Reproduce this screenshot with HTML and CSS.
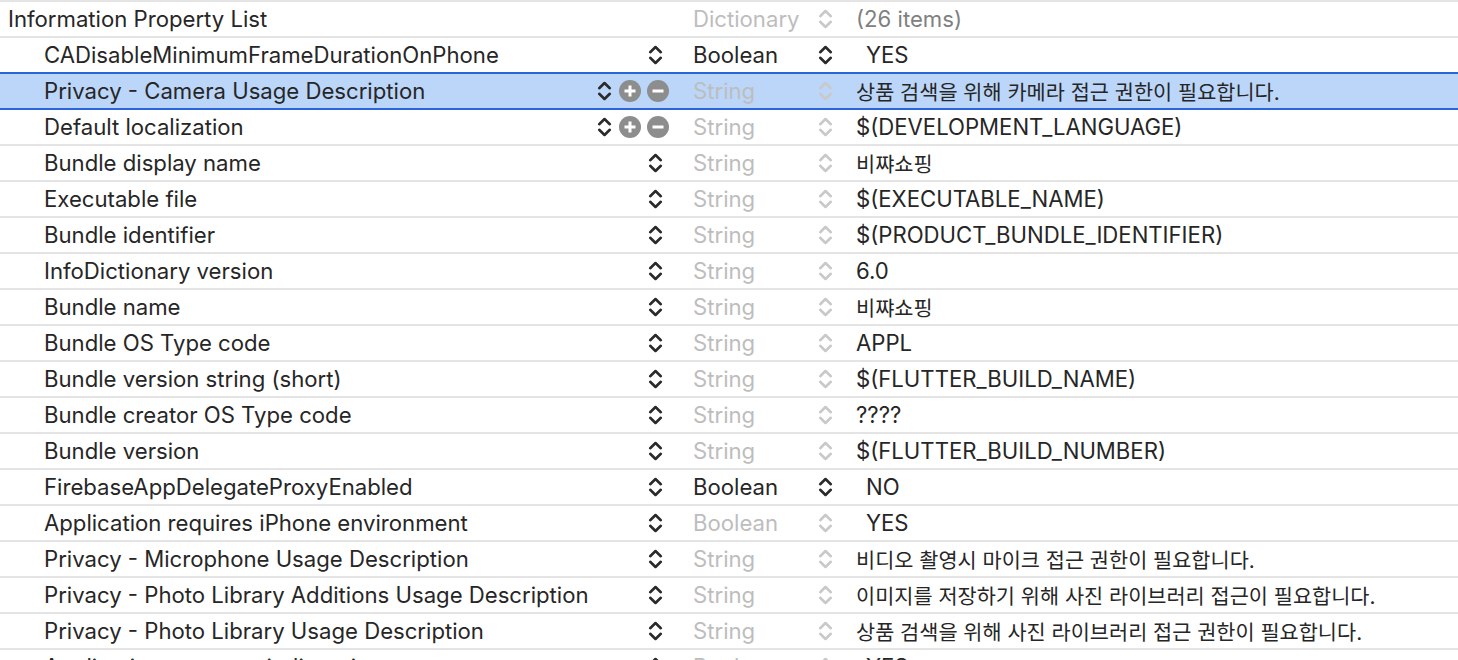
FILE: index.html
```html
<!DOCTYPE html>
<html>
<head>
<meta charset="utf-8">
<link rel="stylesheet" href="styles.css">
</head>
<body>
<svg width="0" height="0" class="defs">
  <defs>
    <symbol id="step" viewBox="0 0 15 22">
      <polyline points="2.2,8.2 7.5,3 12.8,8.2" fill="none" stroke="currentColor" stroke-width="2.6" stroke-linecap="round" stroke-linejoin="round"/>
      <polyline points="2.2,13.8 7.5,19 12.8,13.8" fill="none" stroke="currentColor" stroke-width="2.6" stroke-linecap="round" stroke-linejoin="round"/>
    </symbol>
    <symbol id="plus" viewBox="0 0 22 22">
      <circle cx="11" cy="11" r="11" fill="#8d8d8d"/>
      <path d="M11 5.5v11M5.5 11h11" stroke="#fff" stroke-width="3" stroke-linecap="butt"/>
    </symbol>
    <symbol id="minus" viewBox="0 0 22 22">
      <circle cx="11" cy="11" r="11" fill="#8d8d8d"/>
      <path d="M5.5 11h11" stroke="#fff" stroke-width="3"/>
    </symbol>
  </defs>
</svg>
<div class="plist">
  <div class="row root">
    <div class="key"><span class="name">Information Property List</span></div>
    <div class="type dim">Dictionary</div>
    <svg class="step dim"><use href="#step"/></svg>
    <div class="val muted">(26 items)</div>
  </div>
  <div class="row">
    <div class="key"><span class="name">CADisableMinimumFrameDurationOnPhone</span><span class="ctl"><svg class="step"><use href="#step"/></svg></span></div>
    <div class="type">Boolean</div>
    <svg class="step"><use href="#step"/></svg>
    <div class="val bool">YES</div>
  </div>
  <div class="row sel">
    <div class="key"><span class="name">Privacy - Camera Usage Description</span><span class="ctl wide"><svg class="step"><use href="#step"/></svg><svg class="btn"><use href="#plus"/></svg><svg class="btn"><use href="#minus"/></svg></span></div>
    <div class="type dim">String</div>
    <svg class="step dim"><use href="#step"/></svg>
    <div class="val ko">상품 검색을 위해 카메라 접근 권한이 필요합니다.</div>
  </div>
  <div class="row">
    <div class="key"><span class="name">Default localization</span><span class="ctl wide"><svg class="step"><use href="#step"/></svg><svg class="btn"><use href="#plus"/></svg><svg class="btn"><use href="#minus"/></svg></span></div>
    <div class="type dim">String</div>
    <svg class="step dim"><use href="#step"/></svg>
    <div class="val">$(DEVELOPMENT_LANGUAGE)</div>
  </div>
  <div class="row">
    <div class="key"><span class="name">Bundle display name</span><span class="ctl"><svg class="step"><use href="#step"/></svg></span></div>
    <div class="type dim">String</div>
    <svg class="step dim"><use href="#step"/></svg>
    <div class="val ko">비쨔쇼핑</div>
  </div>
  <div class="row">
    <div class="key"><span class="name">Executable file</span><span class="ctl"><svg class="step"><use href="#step"/></svg></span></div>
    <div class="type dim">String</div>
    <svg class="step dim"><use href="#step"/></svg>
    <div class="val">$(EXECUTABLE_NAME)</div>
  </div>
  <div class="row">
    <div class="key"><span class="name">Bundle identifier</span><span class="ctl"><svg class="step"><use href="#step"/></svg></span></div>
    <div class="type dim">String</div>
    <svg class="step dim"><use href="#step"/></svg>
    <div class="val">$(PRODUCT_BUNDLE_IDENTIFIER)</div>
  </div>
  <div class="row">
    <div class="key"><span class="name">InfoDictionary version</span><span class="ctl"><svg class="step"><use href="#step"/></svg></span></div>
    <div class="type dim">String</div>
    <svg class="step dim"><use href="#step"/></svg>
    <div class="val">6.0</div>
  </div>
  <div class="row">
    <div class="key"><span class="name">Bundle name</span><span class="ctl"><svg class="step"><use href="#step"/></svg></span></div>
    <div class="type dim">String</div>
    <svg class="step dim"><use href="#step"/></svg>
    <div class="val ko">비쨔쇼핑</div>
  </div>
  <div class="row">
    <div class="key"><span class="name">Bundle OS Type code</span><span class="ctl"><svg class="step"><use href="#step"/></svg></span></div>
    <div class="type dim">String</div>
    <svg class="step dim"><use href="#step"/></svg>
    <div class="val">APPL</div>
  </div>
  <div class="row">
    <div class="key"><span class="name">Bundle version string (short)</span><span class="ctl"><svg class="step"><use href="#step"/></svg></span></div>
    <div class="type dim">String</div>
    <svg class="step dim"><use href="#step"/></svg>
    <div class="val">$(FLUTTER_BUILD_NAME)</div>
  </div>
  <div class="row">
    <div class="key"><span class="name">Bundle creator OS Type code</span><span class="ctl"><svg class="step"><use href="#step"/></svg></span></div>
    <div class="type dim">String</div>
    <svg class="step dim"><use href="#step"/></svg>
    <div class="val">????</div>
  </div>
  <div class="row">
    <div class="key"><span class="name">Bundle version</span><span class="ctl"><svg class="step"><use href="#step"/></svg></span></div>
    <div class="type dim">String</div>
    <svg class="step dim"><use href="#step"/></svg>
    <div class="val">$(FLUTTER_BUILD_NUMBER)</div>
  </div>
  <div class="row">
    <div class="key"><span class="name">FirebaseAppDelegateProxyEnabled</span><span class="ctl"><svg class="step"><use href="#step"/></svg></span></div>
    <div class="type">Boolean</div>
    <svg class="step"><use href="#step"/></svg>
    <div class="val bool">NO</div>
  </div>
  <div class="row">
    <div class="key"><span class="name">Application requires iPhone environment</span><span class="ctl"><svg class="step"><use href="#step"/></svg></span></div>
    <div class="type dim">Boolean</div>
    <svg class="step dim"><use href="#step"/></svg>
    <div class="val bool">YES</div>
  </div>
  <div class="row">
    <div class="key"><span class="name">Privacy - Microphone Usage Description</span><span class="ctl"><svg class="step"><use href="#step"/></svg></span></div>
    <div class="type dim">String</div>
    <svg class="step dim"><use href="#step"/></svg>
    <div class="val ko">비디오 촬영시 마이크 접근 권한이 필요합니다.</div>
  </div>
  <div class="row">
    <div class="key"><span class="name">Privacy - Photo Library Additions Usage Description</span><span class="ctl"><svg class="step"><use href="#step"/></svg></span></div>
    <div class="type dim">String</div>
    <svg class="step dim"><use href="#step"/></svg>
    <div class="val ko">이미지를 저장하기 위해 사진 라이브러리 접근이 필요합니다.</div>
  </div>
  <div class="row">
    <div class="key"><span class="name">Privacy - Photo Library Usage Description</span><span class="ctl"><svg class="step"><use href="#step"/></svg></span></div>
    <div class="type dim">String</div>
    <svg class="step dim"><use href="#step"/></svg>
    <div class="val ko">상품 검색을 위해 사진 라이브러리 접근 권한이 필요합니다.</div>
  </div>
  <div class="row last">
    <div class="key"><span class="name">Application supports indirect input events</span><span class="ctl"><svg class="step"><use href="#step"/></svg></span></div>
    <div class="type dim">Boolean</div>
    <svg class="step dim"><use href="#step"/></svg>
    <div class="val bool">YES</div>
  </div>
</div>
</body>
</html>
```
FILE: styles.css
```css
html, body {
  margin: 0;
  padding: 0;
  background: #ffffff;
  overflow: hidden;
}
.defs {
  position: absolute;
  width: 0;
  height: 0;
}
.plist {
  font-family: "Inter", "Noto Sans CJK KR", sans-serif;
  font-size: 22.15px;
  color: #262626;
  width: 1458px;
}
.row {
  display: grid;
  grid-template-columns: 693px 125px 15px 1fr;
  align-items: center;
  height: 36px;
  box-sizing: border-box;
  border-top: 2px solid #e4e4e4;
}
.row.sel {
  background: #bcd6f9;
  border-top-color: #2b63d8;
}
.row.sel + .row {
  border-top-color: #2b63d8;
}
.key {
  display: flex;
  align-items: center;
  padding-left: 44px;
  min-width: 0;
}
.root .key {
  padding-left: 8px;
}
.name {
  flex: 1;
  white-space: nowrap;
  overflow: hidden;
}
.ctl {
  display: flex;
  align-items: center;
  margin-right: 30px;
}
.ctl.wide {
  margin-right: 24px;
  gap: 6px;
}
.step {
  width: 15px;
  height: 22px;
  color: #2a2a2a;
  display: block;
}
.step.dim {
  color: #c9c9c9;
}
.btn {
  width: 22px;
  height: 22px;
  display: block;
}
.ctl.wide .step {
  margin-right: 1px;
}
.type {
  white-space: nowrap;
}
.type.dim {
  color: #bdbdbd;
}
.val {
  padding-left: 23px;
  white-space: nowrap;
}
.val.ko {
  font-size: 20.8px;
}
.val.bool {
  padding-left: 33px;
}
.val.muted {
  color: #808080;
}
```
